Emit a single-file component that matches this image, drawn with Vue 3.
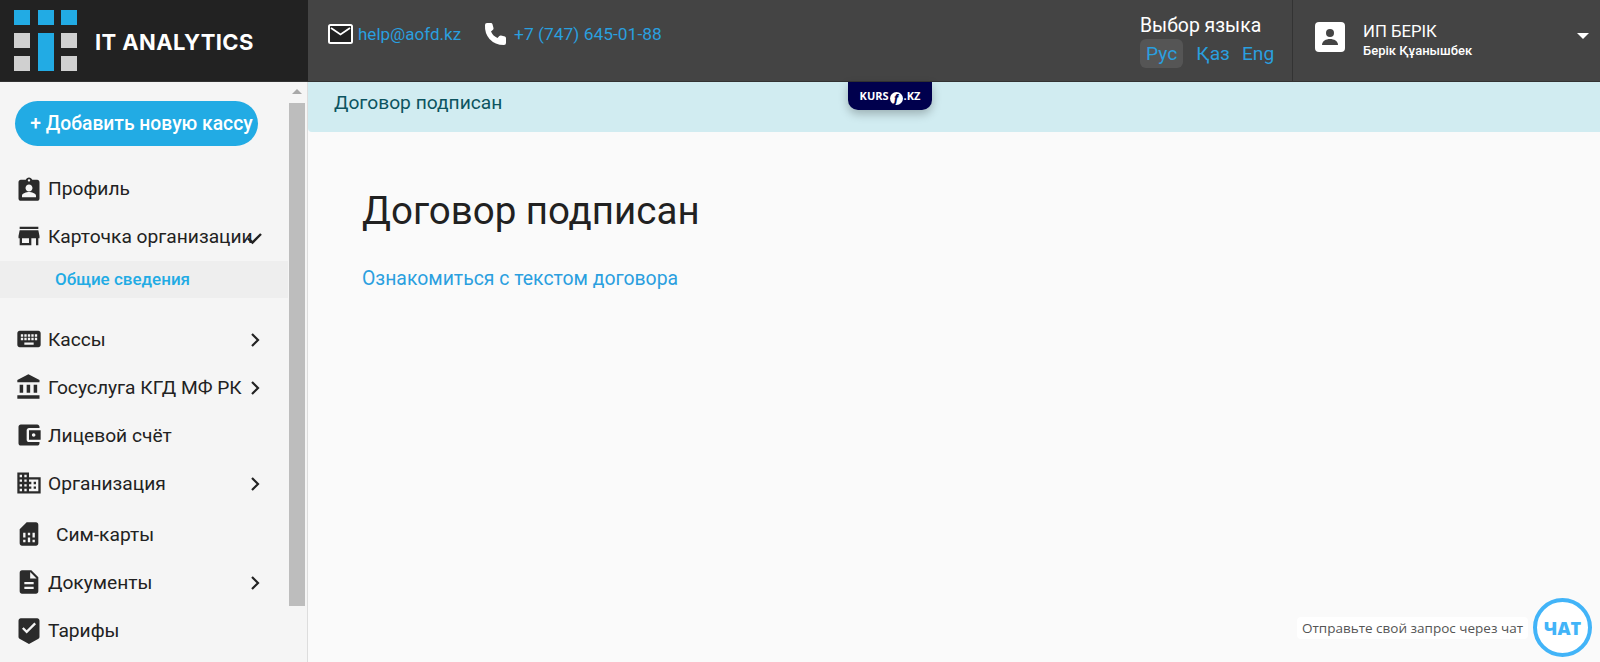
<script setup>
const menu = [
  { label: 'Профиль', icon: 'profile', arrow: '' },
  { label: 'Карточка организации', icon: 'store', arrow: 'down', sub: 'Общие сведения' },
  { label: 'Кассы', icon: 'keyboard', arrow: 'right' },
  { label: 'Госуслуга КГД МФ РК', icon: 'bank', arrow: 'right' },
  { label: 'Лицевой счёт', icon: 'wallet', arrow: '' },
  { label: 'Организация', icon: 'domain', arrow: 'right' },
  { label: 'Сим-карты', icon: 'sim', arrow: '', indent: true },
  { label: 'Документы', icon: 'doc', arrow: 'right' },
  { label: 'Тарифы', icon: 'shield', arrow: '' }
]
const icons = {
  profile: 'M19 5h-4.2C14.4 3.8 13.300 3 12 3s-2.400.8-2.800 2H5c-1.100 0-2 .9-2 2v14c0 1.100.9 2 2 2h14c1.100 0 2-.9 2-2V7c0-1.100-.9-2-2-2zm-7-.5c.55 0 1 .45 1 1s-.45 1-1 1-1-.45-1-1 .45-1 1-1zM12 9c1.660 0 3 1.340 3 3s-1.340 3-3 3-3-1.340-3-3 1.340-3 3-3zm6 11H6v-1.400c0-2 4-3.100 6-3.100s6 1.100 6 3.100V20z',
  store: 'M20 4H4v2h16V4zm1 10v-2l-1-5H4l-1 5v2h1v6h10v-6h4v6h2v-6h1zm-9 4H6v-4h6v4z',
  keyboard: 'M20 5H4c-1.100 0-1.990.9-1.990 2L2 17c0 1.100.9 2 2 2h16c1.100 0 2-.9 2-2V7c0-1.100-.9-2-2-2zm-9 3h2v2h-2V8zm0 3h2v2h-2v-2zM8 8h2v2H8V8zm0 3h2v2H8v-2zm-1 2H5v-2h2v2zm0-3H5V8h2v2zm9 7H8v-2h8v2zm0-4h-2v-2h2v2zm0-3h-2V8h2v2zm3 3h-2v-2h2v2zm0-3h-2V8h2v2z',
  bank: 'M4 10v7h3v-7H4zm6 0v7h3v-7h-3zM2 22h19v-3H2v3zm14-12v7h3v-7h-3zM11.500 1L2 6v2h19V6l-9.500-5z',
  wallet: 'M21 18v1c0 1.100-.9 2-2 2H5c-1.110 0-2-.9-2-2V5c0-1.100.89-2 2-2h14c1.100 0 2 .9 2 2v1h-9c-1.110 0-2 .9-2 2v8c0 1.100.89 2 2 2h9zm-9-2h10V8H12v8zm4-2.500c-.83 0-1.500-.67-1.500-1.500s.67-1.500 1.500-1.500 1.500.67 1.500 1.500-.67 1.500-1.500 1.500z',
  domain: 'M12 7V3H2v18h20V7H12zM6 19H4v-2h2v2zm0-4H4v-2h2v2zm0-4H4V9h2v2zm0-4H4V5h2v2zm4 12H8v-2h2v2zm0-4H8v-2h2v2zm0-4H8V9h2v2zm0-4H8V5h2v2zm10 12h-8v-2h2v-2h-2v-2h2v-2h-2V9h8v10zm-2-8h-2v2h2v-2zm0 4h-2v2h2v-2z',
  sim: 'M19.990 4c0-1.100-.89-2-1.990-2h-8L4 8v12c0 1.100.9 2 2 2h12.010c1.100 0 1.990-.9 1.990-2l-.01-16zM9 19H7v-2h2v2zm8 0h-2v-2h2v2zm-8-4H7v-4h2v4zm4 4h-2v-4h2v4zm0-6h-2v-2h2v2zm4 2h-2v-4h2v4z',
  doc: 'M14 2H6c-1.100 0-1.990.9-1.990 2L4 20c0 1.100.89 2 1.990 2H18c1.100 0 2-.9 2-2V8l-6-6zm2 16H8v-2h8v2zm0-4H8v-2h8v2zm-3-5V3.500L18.500 9H13z',
  shield: 'M19 2H5c-1.100 0-1.990.9-1.990 2L3 17.930c0 .69.35 1.300.88 1.660L12 24l8.110-4.410c.53-.36.88-.97.88-1.660L21 4c0-1.100-.9-2-2-2zm-9 13l-4-4 1.410-1.410L10 12.170l6.590-6.590L18 7l-8 8z'
}
const phone = 'M3 1 L7 1 Q8 1 8.400 2 L9.500 6 Q9.700 7 9 7.700 L7 9.500 Q9 14 13.500 16 L15.300 14 Q16 13.300 17 13.500 L21 14.500 Q22 15 22 16 L22 21 Q22 23 20 23 Q11 23 5.500 17 Q0.500 11 1 3 Q1 1 3 1 Z'
</script>

<template>
  <div class="page">
    <header class="top">
      <div class="brand">
        <div class="logo">
          <i class="b"></i><i class="b"></i><i class="b"></i>
          <i class="g"></i><i class="b tall"></i><i class="g"></i>
          <i class="g"></i><i class="g"></i>
        </div>
        <span class="brand-name">IT ANALYTICS</span>
      </div>
      <div class="bar">
        <div class="contacts">
          <a class="contact">
            <svg width="25" height="20" viewBox="0 0 25 20"><rect x="1" y="1" width="23" height="18" rx="1.500" fill="#222" stroke="#fff" stroke-width="2"/><path d="M3 4l9.500 6.500L22 4" fill="none" stroke="#fff" stroke-width="1.800"/></svg>
            <span>help@aofd.kz</span>
          </a>
          <a class="contact phone">
            <svg width="23" height="24" viewBox="0 0 23 24"><path :d="phone" fill="#fff"/></svg>
            <span class="tel">+7 (747) 645-01-88</span>
          </a>
        </div>
        <div class="langs">
          <div class="lang-title">Выбор языка</div>
          <div class="lang-row">
            <span class="lang active">Рус</span>
            <span class="lang">Қаз</span>
            <span class="lang">Eng</span>
          </div>
        </div>
        <div class="user">
          <div class="avatar">
            <svg width="18" height="18" viewBox="0 0 18 18"><circle cx="9" cy="5" r="4" fill="#444"/><path d="M1 17c0-4 4-6 8-6s8 2 8 6z" fill="#444"/></svg>
          </div>
          <div class="user-text">
            <div class="user-name">ИП БЕРІК</div>
            <div class="user-sub">Берік Құанышбек</div>
          </div>
          <span class="caret"></span>
        </div>
      </div>
    </header>

    <div class="body">
      <aside class="side">
        <div class="side-inner">
          <button class="add">+ Добавить новую кассу</button>
          <nav class="menu">
            <template v-for="m in menu" :key="m.label">
              <div class="item" :class="{ indent: m.indent }">
                <svg class="ico" width="28" height="28" viewBox="0 0 24 24"><path :d="icons[m.icon]" fill="#2b2b2b"/></svg>
                <span class="label">{{ m.label }}</span>
                <svg v-if="m.arrow === 'right'" class="arrow" width="24" height="24" viewBox="0 0 24 24"><path d="M9 6l6 6-6 6" fill="none" stroke="#222" stroke-width="2.200"/></svg>
                <svg v-if="m.arrow === 'down'" class="arrow" width="24" height="24" viewBox="0 0 24 24"><path d="M5 13.500l4.500 4L18 9" fill="none" stroke="#222" stroke-width="2.400"/></svg>
              </div>
              <div v-if="m.sub" class="sub">{{ m.sub }}</div>
            </template>
          </nav>
        </div>
        <div class="scroll">
          <span class="up"></span>
          <span class="thumb"></span>
        </div>
      </aside>

      <main class="main">
        <div class="banner">Договор подписан</div>
        <div class="badge">KURS<b class="f">f</b>.KZ</div>
        <div class="content">
          <h1>Договор подписан</h1>
          <a class="link">Ознакомиться с текстом договора</a>
        </div>
        <div class="chat">
          <span class="chat-note">Отправьте свой запрос через чат</span>
          <span class="chat-btn">ЧАТ</span>
        </div>
      </main>
    </div>
  </div>
</template>

<style scoped>
.page {
  width: 1600px;
  height: 662px;
  display: flex;
  flex-direction: column;
  overflow: hidden;
  font-family: Roboto, "Liberation Sans", sans-serif;
  color: #222;
}
.top {
  height: 82px;
  display: flex;
  flex: none;
  background: #444;
  border-bottom: 1px solid #333;
  box-sizing: border-box;
}
.brand {
  width: 308px;
  flex: none;
  background: #222;
  display: flex;
  align-items: center;
  padding-left: 14px;
  box-sizing: border-box;
}
.logo {
  width: 63px;
  height: 61px;
  margin-top: -1px;
  display: grid;
  grid-template-columns: repeat(3, 16px);
  grid-template-rows: repeat(3, 15px);
  column-gap: 7.500px;
  row-gap: 8px;
}
.logo i { display: block; }
.logo .b { background: #22abe4; }
.logo .g { background: #d0d0d0; }
.logo .tall { grid-row: span 2; }
.logo .g:nth-child(6) { grid-column: 3; }
.logo .g:nth-child(7) { grid-column: 1; }
.logo .g:nth-child(8) { grid-column: 3; }
.brand-name {
  margin-left: 18px;
  font-family: Inter, sans-serif;
  font-weight: 700;
  font-size: 22px;
  letter-spacing: .4px;
  color: #fff;
  position: relative;
  top: 1px;
}
.bar {
  flex: 1;
  display: flex;
  align-items: stretch;
}
.contacts {
  display: flex;
  align-items: center;
  padding: 0 0 13px 20px;
  flex: 1;
}
.contact {
  display: flex;
  align-items: center;
  gap: 5px;
  font-size: 17px;
  color: #2a9fdf;
}
.contact.phone { margin-left: 23px; gap: 7px; }
.tel { font-size: 17.400px; }
.langs {
  width: 152px;
  padding: 15px 0 0 0;
  box-sizing: border-box;
  flex: none;
}
.lang-title {
  font-size: 19.400px;
  line-height: 21px;
  color: #fff;
}
.lang-row {
  display: flex;
  margin-top: 3px;
  font-size: 19.200px;
}
.lang {
  color: #2a9fdf;
  padding: 4px 6px;
  margin-right: 0;
  line-height: 21px;
  border-radius: 6px;
}
.lang.active { background: #555; margin-right: 7px; }
.user {
  width: 308px;
  flex: none;
  border-left: 1px solid #333;
  box-sizing: border-box;
  display: flex;
  align-items: flex-start;
  padding: 22px 11px 0 22px;
  color: #fff;
}
.avatar {
  width: 30px;
  height: 30px;
  border-radius: 4px;
  background: #fff;
  display: flex;
  align-items: center;
  justify-content: center;
  flex: none;
}
.user-text { margin-left: 18px; flex: 1; }
.user-name { font-size: 16.700px; line-height: 19px; }
.user-sub { font-size: 13px; line-height: 16px; font-weight: 500; margin-top: 2px; }
.caret {
  width: 0;
  height: 0;
  margin-top: 11px;
  border-left: 6px solid transparent;
  border-right: 6px solid transparent;
  border-top: 6px solid #fff;
}
.body {
  flex: 1;
  display: flex;
  min-height: 0;
}
.side {
  width: 308px;
  flex: none;
  background: #f5f5f5;
  border-right: 1px solid #ddd;
  box-sizing: border-box;
  position: relative;
  overflow: hidden;
}
.side-inner {
  width: 288px;
  padding-top: 19px;
}
.add {
  display: block;
  margin-left: 15px;
  width: 243px;
  height: 45px;
  border: 0;
  border-radius: 23px;
  background: #22abe4;
  color: #fff;
  font-family: inherit;
  font-size: 19.300px;
  font-weight: 500;
  padding: 0 0 0 10px;
  white-space: nowrap;
}
.menu { margin-top: 18px; }
.item {
  height: 48px;
  display: flex;
  align-items: center;
  padding-left: 15px;
  position: relative;
  font-size: 19.200px;
}
.item.indent { margin-top: 3px; }
.item.indent .label { margin-left: 13px; }
.ico { flex: none; overflow: visible; }
.label { margin-left: 5px; white-space: nowrap; }
.arrow { position: absolute; left: 243px; top: 13px; }
.sub {
  height: 37px;
  line-height: 36px;
  margin-top: 1px;
  margin-bottom: 17px;
  padding-left: 55px;
  background: #eee;
  color: #22abe4;
  font-size: 17px;
  font-weight: 500;
}
.scroll {
  position: absolute;
  left: 289px;
  top: 0;
  width: 16px;
  height: 100%;
}
.up {
  position: absolute;
  left: 3px;
  top: 7px;
  border-left: 5px solid transparent;
  border-right: 5px solid transparent;
  border-bottom: 5px solid #a8a8a8;
}
.thumb {
  position: absolute;
  top: 21px;
  left: 0;
  width: 16px;
  height: 503px;
  background: #bdbdbd;
}
.main {
  flex: 1;
  background: #fafafa;
  position: relative;
  min-width: 0;
}
.banner {
  height: 50px;
  box-sizing: border-box;
  background: #d1ecf1;
  color: #0c5460;
  font-size: 19.200px;
  line-height: 42px;
  padding-left: 26px;
  border-bottom-left-radius: 4px;
}
.badge {
  position: absolute;
  left: 540px;
  top: 0;
  width: 84px;
  height: 28px;
  background: #00004d;
  border-radius: 0 0 10px 10px;
  box-shadow: 0 4px 10px rgba(0, 0, 0, .25);
  color: #fff;
  font-family: "Open Sans", sans-serif;
  font-weight: 700;
  font-size: 11px;
  line-height: 27px;
  text-align: center;
}
.f {
  display: inline-block;
  width: 13px;
  height: 13px;
  line-height: 13px;
  border-radius: 50%;
  background: #fff;
  color: #00004d;
  font-style: italic;
  font-size: 10px;
  margin: 0 1px;
  vertical-align: -2px;
}
.content { padding: 55px 0 0 54px; }
h1 {
  margin: 0;
  font-size: 38.500px;
  line-height: 48px;
  font-weight: 400;
  color: #212121;
}
.link {
  display: block;
  margin-top: 33px;
  font-size: 19.400px;
  line-height: 22px;
  color: #2a9fdf;
}
.chat {
  position: absolute;
  right: 8px;
  bottom: 5px;
  display: flex;
  align-items: center;
  gap: 5px;
}
.chat-note {
  background: #fff;
  border-radius: 4px;
  padding: 0 5px;
  font-family: "Open Sans", sans-serif;
  font-size: 13.500px;
  line-height: 22px;
  color: #555;
}
.chat-btn {
  width: 59px;
  height: 59px;
  box-sizing: border-box;
  border: 4px solid #42b4f8;
  border-radius: 50%;
  background: #fff;
  color: #42b4f8;
  font-family: "Open Sans", sans-serif;
  font-weight: 800;
  font-size: 18px;
  display: flex;
  align-items: center;
  justify-content: center;
}
</style>
<style>
html, body { margin: 0; padding: 0; overflow: hidden; }
</style>
